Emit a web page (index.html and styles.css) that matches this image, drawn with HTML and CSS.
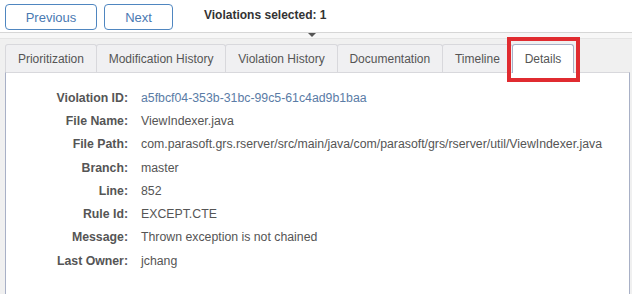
FILE: index.html
```html
<!DOCTYPE html>
<html>
<head>
    <title>Violation Details</title>
    <link rel="stylesheet" href="styles.css">
</head>
<body>
    <div class="toolbar">
        <button class="nav-btn prev">Previous</button>
        <button class="nav-btn next">Next</button>
        <span class="selected">Violations selected: 1</span>
    </div>
    <div class="splitter"><span class="grip"></span></div>
    <div class="tab-frame">
        <div class="tabs">
            <div class="tab">Prioritization</div>
            <div class="tab">Modification History</div>
            <div class="tab">Violation History</div>
            <div class="tab">Documentation</div>
            <div class="tab">Timeline</div>
            <div class="tab active">Details<span class="highlight"></span></div>
        </div>
        <div class="panel">
            <div class="details">
                <div class="label">Violation ID:</div><div class="value id">a5fbcf04-353b-31bc-99c5-61c4ad9b1baa</div>
                <div class="label">File Name:</div><div class="value">ViewIndexer.java</div>
                <div class="label">File Path:</div><div class="value">com.parasoft.grs.rserver/src/main/java/com/parasoft/grs/rserver/util/ViewIndexer.java</div>
                <div class="label">Branch:</div><div class="value">master</div>
                <div class="label">Line:</div><div class="value">852</div>
                <div class="label">Rule Id:</div><div class="value">EXCEPT.CTE</div>
                <div class="label">Message:</div><div class="value">Thrown exception is not chained</div>
                <div class="label">Last Owner:</div><div class="value">jchang</div>
            </div>
        </div>
    </div>
</body>
</html>
```

FILE: styles.css
```css
html, body {
    margin: 0;
    padding: 0;
    height: 100%;
    background: #fff;
    font-family: 'Liberation Sans', Arial, sans-serif;
    overflow: hidden;
}
body {
    display: flex;
    flex-direction: column;
}
.toolbar {
    display: flex;
    align-items: center;
    gap: 7px;
    height: 32px;
    padding: 0 5px;
    box-sizing: border-box;
}
.nav-btn {
    height: 26px;
    background: #fff;
    border: 1px solid #4f86c0;
    border-radius: 4px;
    color: #4a79b2;
    font-family: inherit;
    font-size: 13px;
    padding: 0;
    margin-top: 2px;
}
.prev { width: 92px; }
.next { width: 69px; }
.selected {
    margin-left: 24px;
    font-size: 12px;
    font-weight: bold;
    color: #333;
    margin-top: -2px;
}
.splitter {
    height: 5px;
    border-top: 1px solid #d6d6d6;
    border-bottom: 1px solid #e4e4e4;
    background: #f7f7f7;
    display: flex;
    justify-content: center;
    padding-right: 4px;
}
.grip {
    width: 0;
    height: 0;
    border-left: 4px solid transparent;
    border-right: 4px solid transparent;
    border-top: 4px solid #555;
    margin-left: -4px;
}
.tab-frame {
    flex: 1;
    background: #f0f0f0;
    padding: 5px 2px 0 5px;
    display: flex;
    flex-direction: column;
}
.tabs {
    display: flex;
    height: 28px;
}
.tab {
    position: relative;
    box-sizing: border-box;
    height: 28px;
    padding: 0 11.9px;
    background: #f0f0f2;
    border: 1px solid #d8d8dc;
    border-bottom: none;
    border-radius: 3px 3px 0 0;
    color: #555;
    font-size: 12px;
    line-height: 28px;
    margin-right: -1px;
}
.tab.active {
    background: #fff;
    border: 1px solid #a8b0c6;
    border-bottom: none;
    height: 29px;
    margin-bottom: -1px;
    z-index: 2;
}
.highlight {
    position: absolute;
    left: -6px;
    top: -8px;
    width: 65px;
    height: 37px;
    border: 4px solid #e02b30;
}
.panel {
    flex: 1;
    background: #fff;
    border: 1px solid #a8b0c6;
    border-top-color: #d8d8dc;
    border-bottom: none;
}
.details {
    display: grid;
    grid-template-columns: 122px auto;
    column-gap: 13px;
    grid-auto-rows: 23.3px;
    align-items: center;
    padding-top: 13px;
    font-size: 12.3px;
}
.label {
    text-align: right;
    font-weight: bold;
    color: #555;
}
.value {
    color: #555;
}
.value.id {
    color: #5a7ca6;
}
```
